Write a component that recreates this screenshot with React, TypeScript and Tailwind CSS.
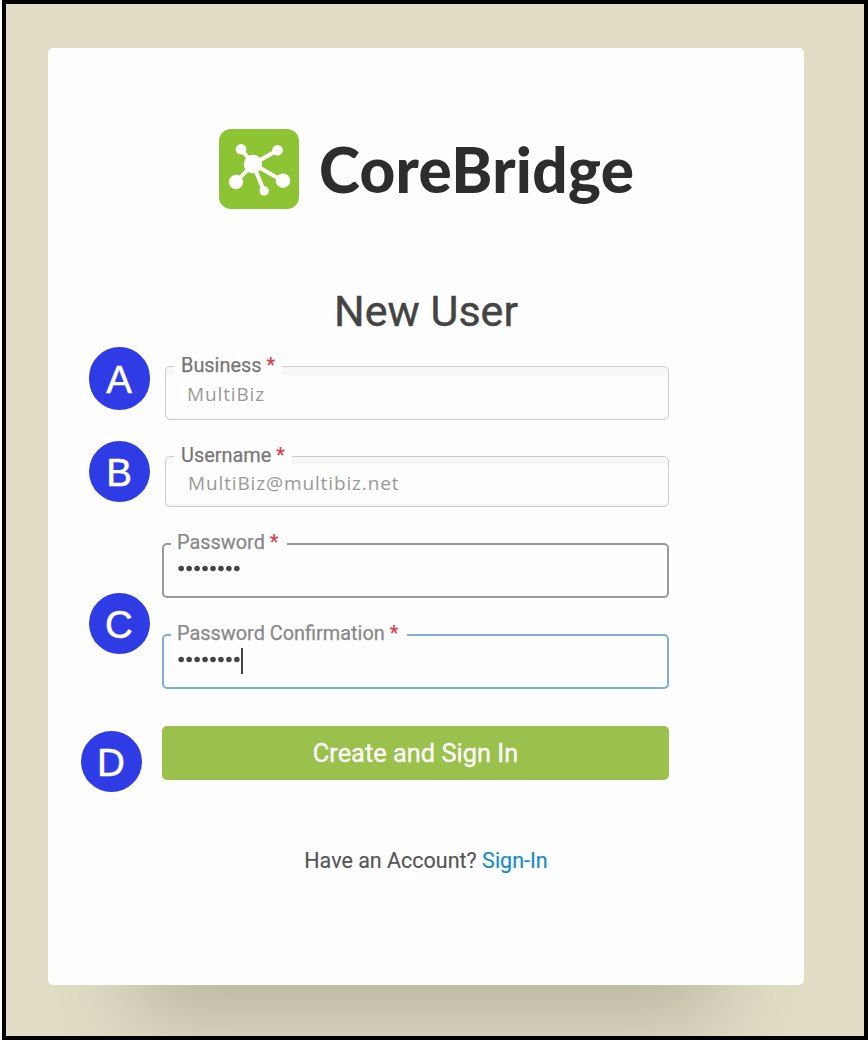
import React from 'react';
import clsx from 'clsx';

type FieldProps = {
  label: string;
  classes: string;
  labelClasses: string;
  children: React.ReactNode;
};

function Logo() {
  return (
    <svg width="80" height="80" viewBox="0 0 80 80" className="shrink-0">
      <rect width="80" height="80" rx="12" fill="#8dc433" />
      <g stroke="#fff" strokeWidth="4" fill="#fff">
        <path d="M34 35 22 20M34 35 59 21M34 35 17 53M34 35 45 62M34 35 64 52" />
        <g stroke="none">
          <circle cx="34" cy="35" r="9.2" />
          <circle cx="22" cy="20.3" r="5.3" />
          <circle cx="58.5" cy="21.3" r="5.3" />
          <circle cx="17" cy="53" r="7.2" />
          <circle cx="64" cy="51.7" r="7.2" />
          <circle cx="45.2" cy="62" r="4.7" />
        </g>
      </g>
    </svg>
  );
}

function Marker({ letter, classes }: { letter: string; classes?: string }) {
  return (
    <div
      className={clsx(
        'flex w-[61px] shrink-0 items-center justify-center rounded-full bg-[#2f3be5] pr-px pt-[3px] font-["Liberation_Sans",sans-serif] text-[38.5px] leading-none text-white [-webkit-text-stroke:0.5px_white]',
        classes
      )}
    >
      {letter}
    </div>
  );
}

function Field({ label, classes, labelClasses, children }: FieldProps) {
  return (
    <div className={clsx('relative rounded-[5px]', classes)}>
      <label
        className={clsx(
          'absolute whitespace-nowrap bg-[#fefefe] text-[19.9px] leading-[28px] [-webkit-text-stroke:0.25px]',
          labelClasses
        )}
      >
        {label} <span className="text-[#d63f50]">*</span>
      </label>
      {children}
    </div>
  );
}

export default function App() {
  return (
    <div className="h-[1040px] w-[868px] bg-white pl-[2px] font-[Roboto,sans-serif]">
      <div className="h-full overflow-hidden border-4 border-black bg-[#e1dcc4] pl-[42px] pt-[44px]">
        <div className="flex h-[937px] w-[756px] flex-col rounded-[5px] bg-[#fefefe] pt-[81px] shadow-[0_122px_80px_-87px_rgba(0,0,0,0.18)]">
          <div className="ml-[171px] flex h-[80px] items-center">
            <Logo />
            <span className="ml-[20px] whitespace-nowrap font-[Lato,sans-serif] text-[62px] font-black leading-[80px] tracking-[0.3px] text-[#2d2d2d]">
              CoreBridge
            </span>
          </div>
          <h1 className="mt-[76px] text-center text-[43px] leading-[52px] text-[#444] [-webkit-text-stroke:0.4px]">
            New User
          </h1>

          <div className="mt-[10px] flex h-[445px]">
            <div className="ml-[33px] flex w-[81px] flex-col">
              <Marker letter="A" classes="ml-[8px] h-[63px]" />
              <Marker letter="B" classes="ml-[8px] mt-[31px] h-[61px]" />
              <Marker letter="C" classes="ml-[8px] mt-[91px] h-[61px]" />
              <Marker letter="D" classes="mt-[77px] h-[61px]" />
            </div>

            <div className="flex w-[507px] flex-col pt-[19px]">
              <Field
                label="Business"
                classes="ml-[3px] h-[54px] border border-[#ccc] shadow-[inset_0_8px_0_#f7f7f7,inset_0_-2px_0_#f9f9f9]"
                labelClasses="-top-[15px] left-2 pl-[7px] pr-[7px] text-[#777]"
              >
                <div className='pl-[21px] pt-[14px] font-["Open_Sans",sans-serif] text-[19px] leading-[26px] tracking-[0.87px] text-[#999]'>
                  MultiBiz
                </div>
              </Field>
              <Field
                label="Username"
                classes="ml-[3px] mt-[36px] h-[51px] border border-[#ccc] shadow-[inset_0_7px_0_#f7f7f7,inset_0_-2px_0_#f4f4f4]"
                labelClasses="-top-[15px] left-2 pl-[7px] pr-[7px] text-[#777]"
              >
                <div className='pl-[22px] pt-[13px] font-["Open_Sans",sans-serif] text-[19px] leading-[26px] tracking-[0.87px] text-[#999]'>
                  MultiBiz@multibiz.net
                </div>
              </Field>
              <Field
                label="Password"
                classes="mt-[36px] h-[55px] border-2 border-[#999]"
                labelClasses="-top-4 left-[7px] pl-[6px] pr-[9px] text-[#888]"
              >
                <Dots />
              </Field>
              <Field
                label="Password Confirmation"
                classes="mt-[36px] h-[55px] border-2 border-[#7facdf]"
                labelClasses="-top-4 left-[7px] pl-[6px] pr-[9px] text-[#888]"
              >
                <Dots caret />
              </Field>
              <button className="mt-[37px] h-[54px] rounded-[5px] bg-[#9ac14b] text-[25.4px] leading-[54px] text-white [-webkit-text-stroke:0.3px]">
                Create and Sign In
              </button>
            </div>
          </div>

          <p className="mt-[55px] text-center text-[21.5px] leading-[28px] text-[#555] [-webkit-text-stroke:0.15px]">
            Have an Account? <a className="text-[#168acb]">Sign-In</a>
          </p>
        </div>
      </div>
    </div>
  );
}

// masked password value, one dot per character
function Dots({ caret }: { caret?: boolean }) {
  return (
    <div className="flex h-[48px] items-center pl-[14px]">
      <svg width="63" height="8" viewBox="0 0 63 8" fill="#444">
        {Array.from('password').map((_, i) => (
          <circle key={i} cx={3.2 + i * 7.95} cy="3.5" r="2.8" />
        ))}
      </svg>
      {caret && <span className="h-[27px] w-[2px] bg-[#444]" />}
    </div>
  );
}
